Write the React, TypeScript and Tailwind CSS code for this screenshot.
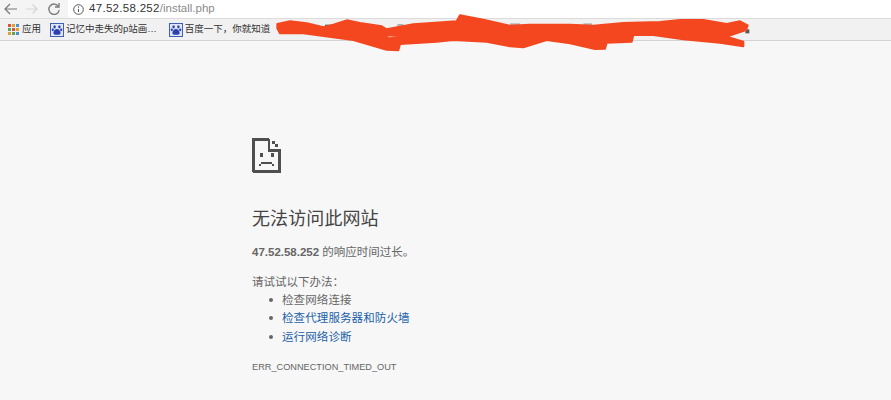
const font = { fontFamily: '"Liberation Sans", "Noto Sans CJK SC", sans-serif' };

function Paw() {
  return (
    <svg width="14" height="14" viewBox="0 0 14 14" className="shrink-0">
      <rect width="14" height="14" fill="#dfe6f7" />
      <rect x="0.5" y="0.5" width="13" height="13" fill="none" stroke="#3f5fb8" />
      <g fill="#2b3fb0">
        <ellipse cx="4.6" cy="3.8" rx="1.2" ry="1.6" />
        <ellipse cx="9.4" cy="3.8" rx="1.2" ry="1.6" />
        <ellipse cx="2.8" cy="6.8" rx="1.1" ry="1.4" />
        <ellipse cx="11.2" cy="6.8" rx="1.1" ry="1.4" />
        <path d="M7 6c2 0 3.6 2.2 3.6 4 0 1.500-1.300 1.800-3.600 1.800S3.400 11.500 3.400 10C3.400 8.200 5 6 7 6z" />
      </g>
    </svg>
  );
}

function Apps() {
  const colors = ['#d9503f', '#e0a030', '#4a90d9', '#54a85a', '#d9503f', '#e0a030', '#e0a030', '#54a85a', '#4a90d9'];
  return (
    <div className="grid grid-cols-3 gap-[1.500px] w-[11px] h-[11px] shrink-0">
      {colors.map((c, i) => (
        <span key={i} className="w-[2.500px] h-[2.500px]" style={{ backgroundColor: c }} />
      ))}
    </div>
  );
}

function SadFile() {
  return (
    <svg width="29" height="35" viewBox="0 0 29 35" fill="none" shapeRendering="crispEdges">
      <path d="M1.500 34V1.500H17" stroke="#4f4f4f" strokeWidth="3" />
      <path d="M27.500 13V33.500H1" stroke="#4f4f4f" strokeWidth="3" />
      <path d="M17 1V12.500H29" stroke="#4f4f4f" strokeWidth="2.500" />
      <g fill="#4f4f4f">
        <rect x="20" y="3" width="3" height="3" />
        <rect x="23" y="6" width="3" height="3" />
        <rect x="8" y="15" width="3" height="4" />
        <rect x="19" y="15" width="3" height="4" />
        <rect x="9" y="24" width="11" height="2" />
        <rect x="7" y="26" width="2" height="2" />
        <rect x="20" y="26" width="2" height="2" />
      </g>
    </svg>
  );
}

function Scribble() {
  return (
    <svg className="absolute left-[270px] top-0" width="500" height="60" viewBox="0 0 1500 180">
      <g fill="#5a5a5a">
        <rect x="165" y="74" width="20" height="12" />
        <rect x="382" y="72" width="18" height="14" fill="#b0b0b0" />
        <rect x="720" y="70" width="30" height="10" fill="#b0b0b0" />
        <rect x="940" y="70" width="26" height="8" fill="#b0b0b0" />
        <rect x="1426" y="88" width="12" height="12" />
      </g>
      <path
        fill="#f4471f"
        stroke="#f4471f"
        strokeWidth="6"
        strokeLinejoin="round"
        fillRule="evenodd"
        d="M22 72 L60 64 L110 70 L160 82 L190 74 L230 61 L270 69 L335 79 L350 88 L430 73 L560 64 L570 46 L640 59 L720 77 L780 74 L900 74 L970 77 L1060 69 L1170 66 L1230 60 L1300 60 L1370 72 L1410 64 L1433 76 L1428 90 L1370 110 L1420 125 L1420 139 L1350 128 L1240 118 L1150 105 L1090 105 L1085 125 L1010 128 L1005 146 L975 147 L900 130 L830 120 L760 142 L720 139 L650 125 L550 120 L500 125 L390 132 L385 151 L350 149 L250 120 L100 100 L30 100 L22 85 Z M330 106 L420 108 L360 115 Z M556 97 L650 94 L600 99 Z M1062 88 L1082 90 L1066 92 Z"
      />
    </svg>
  );
}

export default function App() {
  return (
    <div className="relative w-[891px] h-[400px] overflow-hidden bg-[#f7f7f7]" style={font}>
      <div className="h-[18px] bg-[#f4f4f4] flex items-center pl-[3px]">
        <svg width="16" height="14" viewBox="0 0 16 14" fill="none" stroke="#77787a" strokeWidth="1.200">
          <path d="M14 7H2M7 2L2 7l5 5" />
        </svg>
        <svg className="ml-[6px]" width="14" height="14" viewBox="0 0 14 14" fill="none" stroke="#d5d5d5" strokeWidth="1.200">
          <path d="M1 7h11M7.500 2.500L12 7l-4.500 4.500" />
        </svg>
        <svg className="ml-[8px]" width="14" height="14" viewBox="0 0 14 14" fill="none" stroke="#77787a" strokeWidth="1.300">
          <path d="M11.500 4.500A5.200 5.200 0 1 0 12.200 8" />
          <path d="M12 1v4H8" />
        </svg>
        <div className="ml-[7px] flex-1 h-[18px] bg-white rounded-bl-[3px] flex items-center pl-[5px] text-[11.500px]">
          <svg width="11" height="11" viewBox="0 0 11 11" fill="none" stroke="#555" strokeWidth="1" className="shrink-0">
            <circle cx="5.500" cy="5.500" r="4.800" />
            <path d="M5.500 5v3M5.500 2.500v1.300" />
          </svg>
          <span className="ml-[5px] text-[#333] tracking-[0.3px]">47.52.58.252</span>
          <span className="text-[#8a8a8a]">/install.php</span>
        </div>
      </div>
      <div className="h-[23px] bg-[#f1f1f1] border-y border-t-[#dcdcdc] border-b-[#d4d4d4] flex items-center pl-[8px] text-[9.500px] text-[#333]">
        <Apps />
        <span className="ml-[3px]">应用</span>
        <span className="ml-[9px] flex items-center">
          <Paw />
          <span className="ml-[2px] whitespace-nowrap">记忆中走失的p站画…</span>
        </span>
        <span className="ml-[12px] flex items-center">
          <Paw />
          <span className="ml-[2px] whitespace-nowrap">百度一下，你就知道</span>
        </span>
      </div>
      <Scribble />
      <main className="ml-[252px] pt-[97px] w-[400px] text-[#666]">
        <SadFile />
        <h1 className="mt-[34px] text-[18px] leading-[24px] text-[#444] tracking-[0.1px]">无法访问此网站</h1>
        <p className="mt-[13px] text-[11.500px] leading-[16px]">
          <b className="font-bold">47.52.58.252</b> 的响应时间过长。
        </p>
        <p className="mt-[14px] text-[11.500px] leading-[16px]">请试试以下办法：</p>
        <ul className="mt-[1px] pl-[30px] text-[11.500px] leading-[18.250px] tracking-[0.1px]">
          <li className="flex items-center"><i className="w-[4px] h-[4px] rounded-full bg-[#666] mr-[9px] -ml-[13px]" />检查网络连接</li>
          <li className="flex items-center text-[#1c5fa8]"><i className="w-[4px] h-[4px] rounded-full bg-[#666] mr-[9px] -ml-[13px]" />检查代理服务器和防火墙</li>
          <li className="flex items-center text-[#1c5fa8]"><i className="w-[4px] h-[4px] rounded-full bg-[#666] mr-[9px] -ml-[13px]" />运行网络诊断</li>
        </ul>
        <p className="mt-[15px] text-[9.200px] leading-[12px] text-[#666]">ERR_CONNECTION_TIMED_OUT</p>
      </main>
    </div>
  );
}
